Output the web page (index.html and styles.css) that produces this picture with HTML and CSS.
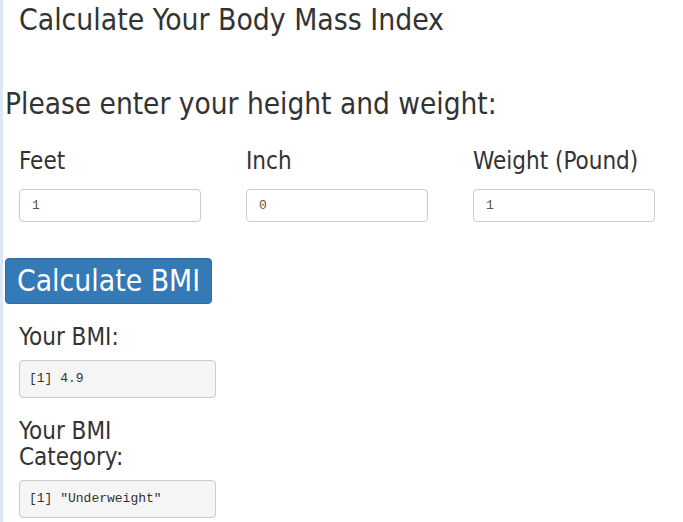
FILE: index.html
```html
<!DOCTYPE html>
<html>
<head>
<meta charset="utf-8">
<link rel="stylesheet" href="styles.css">
</head>
<body>
<div class="page">
  <h1 class="title">Calculate Your Body Mass Index</h1>
  <h2 class="prompt">Please enter your height and weight:</h2>
  <div class="inputs">
    <div class="field">
      <label class="label">Feet</label>
      <div class="input">1</div>
    </div>
    <div class="field">
      <label class="label">Inch</label>
      <div class="input">0</div>
    </div>
    <div class="field">
      <label class="label">Weight (Pound)</label>
      <div class="input">1</div>
    </div>
  </div>
  <button class="btn">Calculate BMI</button>
  <div class="output">
    <div class="out-label">Your BMI:</div>
    <pre class="out-box">[1] 4.9</pre>
  </div>
  <div class="output">
    <div class="out-label narrow">Your BMI Category:</div>
    <pre class="out-box">[1] "Underweight"</pre>
  </div>
</div>
</body>
</html>
```

FILE: styles.css
```css
html, body {
  margin: 0;
  padding: 0;
  background: #fff;
}
body {
  font-family: "DejaVu Sans Condensed", "DejaVu Sans", sans-serif;
  color: #333;
}
.page {
  border-left: 3px solid #dce8f6;
  min-height: 522px;
  box-sizing: border-box;
  padding-left: 2px;
}
.title {
  margin: 0;
  padding: 2px 0 0 14px;
  font-size: 29.8px;
  font-weight: normal;
  line-height: 36px;
}
.prompt {
  margin: 46px 0 0 0;
  font-size: 29.5px;
  font-weight: normal;
  line-height: 40px;
}
.inputs {
  display: flex;
  margin-top: 22px;
}
.field {
  flex: 0 0 227px;
  padding-left: 14px;
  box-sizing: border-box;
}
.label {
  display: block;
  font-size: 24px;
  line-height: 30px;
}
.input {
  margin-top: 13px;
  width: 182px;
  height: 33px;
  box-sizing: border-box;
  border: 1px solid #ccc;
  border-radius: 4px;
  font-family: "Liberation Mono", monospace;
  font-size: 13px;
  color: #555;
  padding: 8px 12px;
  line-height: 15px;
}
.btn {
  display: block;
  margin: 36px 0 0 0;
  width: 207px;
  height: 46px;
  background: #337ab7;
  color: #fff;
  border: 1px solid #2e6da4;
  border-radius: 4px;
  font-family: inherit;
  font-size: 29.8px;
  padding: 0;
  line-height: 44px;
}
.output {
  padding-left: 14px;
}
.out-label {
  font-size: 24px;
  line-height: 26px;
  margin-top: 20px;
}
.out-label.narrow {
  width: 130px;
  margin-top: 20px;
}
.out-box {
  margin: 10px 0 0 0;
  width: 197px;
  height: 38px;
  box-sizing: border-box;
  background: #f5f5f5;
  border: 1px solid #ccc;
  border-radius: 4px;
  font-family: "Liberation Mono", monospace;
  font-size: 13px;
  color: #333;
  padding: 10px 9px;
  line-height: 15px;
}
```
